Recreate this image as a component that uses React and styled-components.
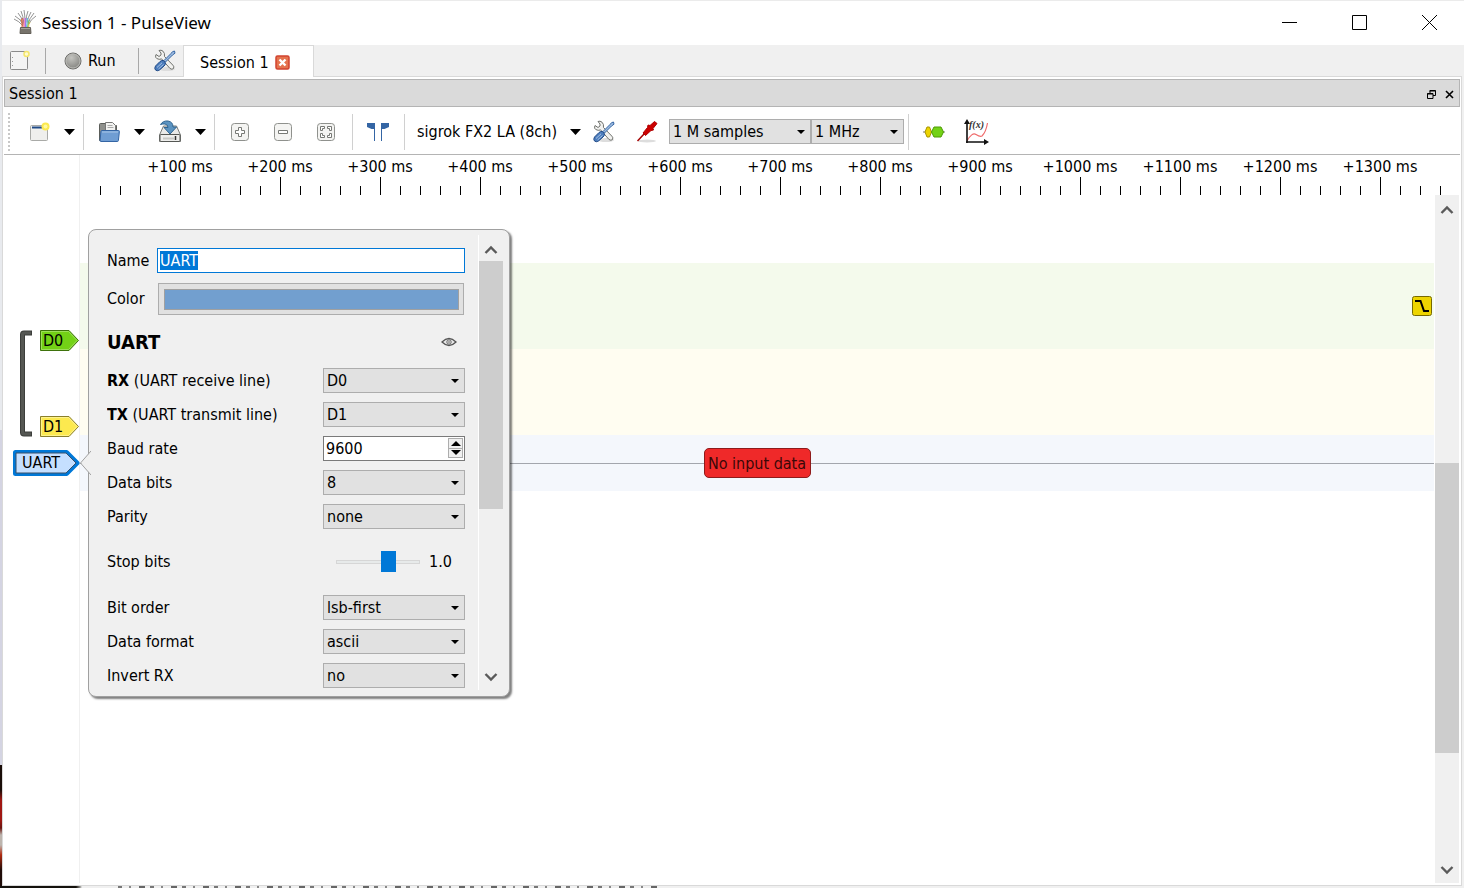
import React, { useEffect, useRef, useState } from "react";
import styled, { createGlobalStyle } from "styled-components";

const GlobalStyle = createGlobalStyle`
  *, *::before, *::after { box-sizing: border-box; }
  html, body, #root { height: 100%; }
  body {
    margin: 0;
    overflow: hidden;
    color: #000;
    font-family: "DejaVu Sans Condensed", "DejaVu Sans", sans-serif;
    font-size: 16px;
    line-height: 20px;
  }
  button, input, select { font: inherit; color: inherit; margin: 0; }
  button { padding: 0; border: 0; background: none; cursor: default; }
  svg { display: block; flex: none; }
`;

/* ---------- window frame ---------- */

const Desktop = styled.div`
  height: 100vh;
  display: flex;
  flex-direction: column;
  padding-left: 2px;
  background: linear-gradient(#e8eaee 0 430px, #d4d4e2 430px 765px, #1a0d08 765px 790px, #a01712 800px 820px, #6a1510 828px, #bdb5ae 835px 845px, #b02a10 855px, #200c08 870px);
`;

const DesktopEdge = styled.div`
  height: 2px;
  margin-left: -2px;
  background: linear-gradient(90deg, #15120d 0 76px, #8c8c88 80px, #f0f0f0 82px);
  &::after {
    content: "";
    display: block;
    height: 2px;
    margin-left: 118px;
    width: 544px;
    background: repeating-linear-gradient(90deg, #777 0 4px, transparent 4px 11px, #888 11px 13px, transparent 13px 21px, #666 21px 27px, transparent 27px 32px);
  }
`;

const Window = styled.main`
  flex: 1;
  min-height: 0;
  display: flex;
  flex-direction: column;
  background: #f0f0f0;
  border-top: 1px solid #ebebeb;
`;

const TitleBar = styled.header`
  height: 44px;
  flex: none;
  display: flex;
  align-items: center;
  background: #fff;
  padding: 0 0 1px 12px;
`;

const WindowTitle = styled.h1`
  flex: 1;
  margin: 0 0 0 5px;
  font-family: "Noto Sans", "Open Sans", sans-serif;
  font-size: 17px;
  font-weight: 400;
  line-height: 24px;
  white-space: nowrap;
`;

const WindowButton = styled.button`
  width: 70px;
  height: 43px;
  display: grid;
  place-items: center;
`;

const MainBar = styled.div`
  height: 31px;
  flex: none;
  display: flex;
  align-items: stretch;
`;

const MainSlot = styled.div`
  display: flex;
  align-items: center;
  width: ${(p) => p.$width}px;
  padding-left: ${(p) => p.$pad}px;
`;

const MainSeparator = styled.div`
  width: 1px;
  height: 26px;
  align-self: center;
  background: #a8a8a8;
`;

const RunButton = styled.button`
  display: flex;
  align-items: center;
  gap: 6px;
`;

const SessionTab = styled.div`
  display: flex;
  align-items: center;
  gap: 6px;
  width: 131px;
  padding: 2px 0 0 16px;
  margin-bottom: -1px;
  z-index: 1;
  background: #fff;
  border: 1px solid #d9d9d9;
  border-bottom: 0;
  white-space: nowrap;
`;

const Pane = styled.section`
  flex: 1;
  min-height: 0;
  display: flex;
  flex-direction: column;
  margin-right: 2px;
  padding: 2px 1px;
  background: #fff;
  border: 1px solid #d9d9d9;
`;

const DockTitle = styled.header`
  height: 28px;
  flex: none;
  display: flex;
  align-items: center;
  padding: 2px 1px 0 4px;
  background: #dadada;
  border: 1px solid #b4b4b4;
`;

const DockName = styled.h2`
  flex: 1;
  margin: 0;
  font-size: 16px;
  font-weight: 400;
`;

const DockButton = styled.button`
  width: 18px;
  height: 20px;
  display: grid;
  place-items: center;
`;

/* ---------- toolbar ---------- */

const Toolbar = styled.div`
  height: 48px;
  flex: none;
  display: flex;
  align-items: center;
  padding-top: 2px;
  border-bottom: 1px solid #b4b4b4;
`;

const Grip = styled.div`
  width: 2px;
  height: 38px;
  margin: 0 14px 0 4px;
  background: repeating-linear-gradient(#c8c8c8 0 2px, transparent 2px 4px);
`;

const ToolGroup = styled.div`
  height: 36px;
  display: flex;
  align-items: center;
  gap: ${(p) => p.$gap || 0}px;
  padding: 0 ${(p) => p.$end || 0}px 0 ${(p) => p.$start || 0}px;
  border-right: ${(p) => (p.$last ? 0 : 1)}px solid #d0d0d0;
`;

const SplitButton = styled.div`
  display: flex;
`;

const ToolButton = styled.button`
  width: 30px;
  height: 32px;
  display: grid;
  place-items: center;
`;

const MenuButton = styled(ToolButton)`
  width: 29px;
  padding-left: 2px;
`;

const DeviceButton = styled.button`
  width: 155px;
  height: 32px;
  padding-left: 12px;
  text-align: left;
  white-space: nowrap;
`;

const Combos = styled.div`
  display: flex;
  margin-left: -6px;
`;

/* ---------- controls ---------- */

const SelectFrame = styled.div`
  display: grid;
  align-items: center;
  width: ${(p) => p.$width}px;
  height: 25px;
  flex: none;
  > * { grid-area: 1 / 1; }
  > svg { justify-self: end; margin-right: 6px; pointer-events: none; }
`;

const SelectBox = styled.select`
  appearance: none;
  width: 100%;
  height: 25px;
  padding: 0 3px;
  line-height: 20px;
  background: #e1e1e1;
  border: 1px solid #adadad;
  border-radius: 0;
  outline: 0;
`;

const TextBox = styled.input`
  width: 100%;
  height: 25px;
  padding: 0 2px;
  background: #fff;
  border: 1px solid #0078d7;
  outline: 0;
  &::selection { background: #0078d7; color: #fff; }
`;

const SpinFrame = styled.div`
  display: flex;
  width: 142px;
  height: 25px;
  padding: 1px 1px 2px 0;
  background: #fff;
  border: 1px solid #7a7a7a;
`;

const SpinInput = styled.input`
  flex: 1;
  min-width: 0;
  padding: 1px 2px 0;
  border: 0;
  outline: 0;
  background: none;
`;

const SpinButtons = styled.div`
  display: flex;
  flex-direction: column;
  width: 15px;
`;

const SpinButton = styled.button`
  flex: 1;
  display: grid;
  place-items: center;
  background: #f0f0f0;
  border: 1px solid #adadad;
  & + & { border-top: 0; }
`;

const Slider = styled.input`
  appearance: none;
  width: 84px;
  height: 21px;
  background: none;
  outline: 0;
  &::-webkit-slider-runnable-track {
    height: 4px;
    background: #e7eaea;
    border: 1px solid #d6d6d6;
  }
  &::-webkit-slider-thumb {
    appearance: none;
    width: 15px;
    height: 21px;
    margin-top: -10px;
    background: #0078d7;
  }
`;

/* ---------- trace view ---------- */

const Workspace = styled.div`
  flex: 1;
  min-height: 0;
  display: flex;
  position: relative;
`;

const Gutter = styled.div`
  width: 76px;
  flex: none;
  padding-top: 175px;
  border-right: 1px solid #f0f0f0;
`;

const ChannelGroup = styled.div`
  display: flex;
  justify-content: space-between;
  height: 107px;
  padding-left: 15px;
`;

const GroupTags = styled.div`
  display: flex;
  flex-direction: column;
  justify-content: space-between;
`;

const Tag = styled.button`
  display: grid;
  align-items: center;
  justify-items: start;
  text-align: left;
  > * { grid-area: 1 / 1; }
`;

const TagText = styled.span`
  padding-left: ${(p) => p.$pad}px;
`;

const DecoderTagRow = styled.div`
  display: flex;
  justify-content: flex-end;
  margin: 12px -1px 0 0;
`;

const Scene = styled.div`
  flex: 1;
  min-width: 0;
  display: flex;
  flex-direction: column;
`;

const Ruler = styled.div`
  height: 40px;
  flex: none;
  display: flex;
  padding-left: 50px;
  overflow: hidden;
  position: relative;
  &::after {
    content: "";
    position: absolute;
    left: 20px;
    right: 0;
    bottom: 0;
    height: 9px;
    background: repeating-linear-gradient(90deg, #000 0 1px, transparent 1px 20px);
  }
`;

const RulerMark = styled.div`
  width: 100px;
  flex: none;
  display: flex;
  flex-direction: column;
  align-items: center;
  justify-content: space-between;
  padding-top: 2px;
  white-space: nowrap;
  &::after {
    content: "";
    width: 1px;
    height: 18px;
    margin-left: 1px;
    background: #000;
  }
`;

const SceneBody = styled.div`
  flex: 1;
  min-height: 0;
  display: flex;
  gap: 1px;
  padding-right: 1px;
`;

const Lanes = styled.div`
  flex: 1;
  padding-top: 68px;
`;

const Lane = styled.div`
  display: flex;
  align-items: center;
  justify-content: flex-end;
  height: ${(p) => p.$height}px;
  padding-right: 2px;
  background: ${(p) => p.$color};
`;

const DecoderLane = styled(Lane)`
  justify-content: center;
  padding: 0;
  &::before, &::after {
    content: "";
    flex: 1;
    height: 1px;
    background: #a3a6ad;
  }
`;

const ErrorNote = styled.div`
  width: 107px;
  height: 30px;
  border: 1px solid #8e1b1b;
  border-radius: 5px;
  background: #ef2929;
  color: #3a0808;
  line-height: 29px;
  text-align: center;
  white-space: nowrap;
`;

/* ---------- scroll bars ---------- */

const ScrollTrack = styled.div`
  width: ${(p) => (p.$line ? 25 : 24)}px;
  flex: none;
  display: flex;
  flex-direction: column;
  background: #f0f0f0;
  border-left: ${(p) => (p.$line ? 1 : 0)}px solid #fff;
`;

const ScrollButton = styled.button`
  height: 26px;
  flex: none;
  display: grid;
  place-items: center;
  &:first-child { padding-top: 4px; }
`;

const ScrollSpace = styled.div`
  flex: ${(p) => p.$share};
  background: ${(p) => (p.$thumb ? "#cdcdcd" : "transparent")};
`;

/* ---------- decoder popup ---------- */

const Popup = styled.form`
  position: absolute;
  left: 84px;
  top: 74px;
  width: 422px;
  height: 468px;
  display: flex;
  padding: 5px 6px 6px 18px;
  background: #f0f0f0;
  border: 1px solid #a0a0a0;
  border-radius: 8px;
  box-shadow: 2px 2px 2px rgba(0, 0, 0, 0.5);
`;

const PopupPointer = styled.svg`
  position: absolute;
  left: -9px;
  top: 220px;
`;

const PopupBody = styled.div`
  flex: 1;
  margin-right: 13px;
  padding-top: 13px;
  overflow: hidden;
`;

const FormRow = styled.div`
  display: flex;
  align-items: center;
  justify-content: space-between;
  height: ${(p) => p.$height || 25}px;
  margin-bottom: 9px;
  white-space: nowrap;
`;

const WideField = styled.div`
  width: 308px;
`;

const ColorButton = styled.button`
  display: block;
  width: 306px;
  height: 32px;
  margin-left: 1px;
  padding: 5px 4px 4px 5px;
  background: #e1e1e1;
  border: 1px solid #adadad;
`;

const Swatch = styled.span`
  display: block;
  height: 21px;
  background: #729fcf;
  border: 1px solid #a0a0a0;
`;

const DecoderHeading = styled.h3`
  margin: 0;
  font-size: 20px;
  font-weight: 700;
`;

const EyeButton = styled.button`
  width: 32px;
  height: 24px;
  display: grid;
  place-items: center;
`;

const SliderField = styled.div`
  display: flex;
  align-items: center;
  gap: 9px;
  width: 129px;
`;

/* ---------- icons ---------- */

const Triangle = ({ width = 11, height = 6, up }) => (
  <svg width={width} height={height} viewBox="0 0 11 6" preserveAspectRatio="none">
    <path d={up ? "M0 6h11L5.500 0z" : "M0 0h11L5.500 6z"} fill="#000" />
  </svg>
);

const Chevron = ({ up }) => (
  <svg width="14" height="10" viewBox="0 0 14 10" fill="none" stroke="#5a5a5a" strokeWidth="2.400">
    <path d={up ? "M1.500 8 7 2.500 12.500 8" : "M1.500 2 7 7.500 12.500 2"} />
  </svg>
);

const AppIcon = () => (
  <svg width="23" height="25" viewBox="0 0 23 25" fill="none" strokeWidth="1">
    <path
      d="M9 15Q7 9 1 6M9 14Q8 7 4 3M10 13Q9 6 7 1M11 12Q11 6 10 0M12 12Q12 6 14 1M13 13Q14 7 17 2M14 14Q15 9 20 3M14 15Q17 9 22 6M9 16Q5 11 0 9"
      stroke="#777"
      strokeWidth="0.800"
    />
    <path d="M8 18Q8.500 12 7 9" stroke="#d8743c" />
    <path d="M9 18Q9.500 11 8.500 8" stroke="#e2554f" />
    <path d="M10.500 18V8" stroke="#e98bd0" />
    <path d="M11.500 18V8" stroke="#9d79e8" />
    <path d="M12.500 18Q13 12 13.500 8" stroke="#59b4e8" />
    <path d="M13.500 18Q14 13 15 10" stroke="#70c95c" />
    <path d="M14.500 18Q14.500 14 16 12" stroke="#d6bd43" />
    <path d="M6.500 17.500h10l.5 6H6z" fill="#77736b" stroke="#625e57" />
    <path d="M7 18.500h9" stroke="#a6a299" />
  </svg>
);

const NewPageIcon = () => (
  <svg width="21" height="22" viewBox="0 0 21 22">
    <rect x="1.500" y="1.500" width="17" height="18" rx="1" fill="#f4f4f4" stroke="#8b8b8b" />
    <path d="M3.500 7v1M3.500 11v1M3.500 15v1" stroke="#999" />
    <circle cx="17.500" cy="4" r="2.500" fill="#fffbd0" stroke="#f5e66b" strokeWidth="1.500" />
  </svg>
);

const RunIcon = () => (
  <svg width="18" height="18" viewBox="0 0 18 18">
    <defs>
      <radialGradient id="led" cx="0.4" cy="0.3" r="0.7">
        <stop offset="0" stopColor="#c4c4c0" />
        <stop offset="1" stopColor="#858581" />
      </radialGradient>
    </defs>
    <circle cx="9" cy="9" r="8" fill="url(#led)" stroke="#6d6d6a" />
    <circle cx="9" cy="9" r="7" fill="none" stroke="#b9b9b5" />
  </svg>
);

const ToolsIcon = () => (
  <svg width="22" height="23" viewBox="0 0 22 23">
    <ellipse cx="13" cy="20" rx="8" ry="2" fill="#ddd" />
    <path d="M5 1.500 7 4v2L5 7.500 2 5.500Q.5 9 4 10q2 .8 3.500-.2l8.500 9.700q2 1.500 3.500 0 1-1.800-.6-3.300L10.500 7.500Q11 4 9 2.200 7 .500 5 1.500z" fill="#f1f1ef" stroke="#6f716d" />
    <path d="M18.500 2.700 20.500 2 21 4.200 18.500 6 11.500 13 10 11.500 17 4.500z" fill="#9dbbe0" stroke="#3465a4" />
    <path d="M9.500 11.500 11.500 14q0 1.800-1.500 3L5.500 21q-2.500 1.500-4 0t0-4L6 12.500q1.800-1.500 3.500-1z" fill="#4c7dbd" stroke="#204a87" />
    <path d="M3 18.500 8 13.800M4.500 20 9.500 15.500" stroke="#a9c4e6" />
  </svg>
);

const TabCloseIcon = () => (
  <svg width="15" height="15" viewBox="0 0 15 15">
    <rect x="1" y="1" width="13" height="13" rx="1.500" fill="#e5734e" stroke="#d1432f" strokeWidth="1.500" />
    <path d="m4.500 4.500 6 6m0-6-6 6" stroke="#fff" strokeWidth="2.400" />
  </svg>
);

const NewSessionIcon = () => (
  <svg width="22" height="22" viewBox="0 0 22 22">
    <rect x="2.500" y="4.500" width="17" height="15" rx="1" fill="#efefed" stroke="#a9aaa7" />
    <path d="M4 6.500h13" stroke="#204a87" strokeWidth="2" />
    <circle cx="17.500" cy="5.500" r="4" fill="#fce94f" />
    <circle cx="17.500" cy="5.500" r="2" fill="#fff9a0" />
  </svg>
);

const OpenIcon = () => (
  <svg width="22" height="22" viewBox="0 0 22 22">
    <path d="M1.500 19.500V3.500q0-1 1-1h5l2 2h9v15z" fill="#8f908c" stroke="#5b5d59" />
    <path d="M7.500 12V1.500h7l3 3V12z" fill="#f3f3f1" stroke="#777" />
    <path d="M9.500 4.500h5M9.500 6.500h6" stroke="#aaa" />
    <path d="M4 9.500h16.500q1 0 .9 1l-1 9q-.1 1-1 1H3q-1 0-.9-1l.8-9q.1-1 1.100-1z" fill="#6f9dd3" stroke="#3465a4" />
    <path d="M4 11h16" stroke="#a9c6e8" />
  </svg>
);

const SaveIcon = () => (
  <svg width="22" height="23" viewBox="0 0 22 23">
    <path d="M4.500 6h13l4 9v6.500h-21V15z" fill="#e9e9e7" stroke="#777976" />
    <rect x="1" y="14.500" width="20" height="7" rx="1" fill="#eeeeec" stroke="#555753" />
    <path d="M4 18.500h11" stroke="#c8c8c5" strokeWidth="2" />
    <path d="M16.500 16v4" stroke="#333" strokeWidth="1.500" />
    <path d="M1.500 4.500Q4 .5 9 1q5 .8 5 6h3.500L11 14 5 7.500h4Q9 4.500 6 4 3.500 3.700 1.500 4.500z" fill="#5b93c1" stroke="#2f6592" />
  </svg>
);

const ZoomIcon = ({ kind }) => (
  <svg width="20" height="20" viewBox="0 0 20 20">
    <rect x="1.500" y="1.500" width="17" height="17" rx="3" fill="#f4f4f2" stroke="#8f918d" />
    {kind === "in" && <path d="M8.500 5.500h3v3h3v3h-3v3h-3v-3h-3v-3h3z" fill="#fff" stroke="#777975" />}
    {kind === "out" && <path d="M5.500 8.500h9v3h-9z" fill="#fff" stroke="#777975" />}
    {kind === "fit" && (
      <path
        d="M4.500 4.500h4v2h-2v2h-2zM11.500 4.500h4v4h-2v-2h-2zM4.500 11.500h2v2h2v2h-4zM13.500 11.500h2v4h-4v-2h2z"
        fill="#fff"
        stroke="#777975"
      />
    )}
  </svg>
);

const CursorsIcon = () => (
  <svg width="22" height="20" viewBox="0 0 22 20" fill="#3465a4">
    <path d="M0 1h8v18H7V7H4.500L0 5zM22 1h-8v18h1V7h2.500L22 5z" />
  </svg>
);

const ProbeIcon = () => (
  <svg width="22" height="22" viewBox="0 0 22 22">
    <ellipse cx="11" cy="20" rx="9" ry="1.500" fill="#ddd" />
    <path d="M1.500 20 8.500 12.500" stroke="#a40000" strokeWidth="1.500" />
    <path d="M7 12 11.500 6.500l.5-2.500 2 .5L18.500.5l2.500 2L17 7.500l.5 1.500-2.500.5L9.500 14.500z" fill="#cc0000" stroke="#b00000" />
  </svg>
);

const DecoderIcon = () => (
  <svg width="22" height="12" viewBox="0 0 22 12">
    <path d="M0 6h22" stroke="#777" />
    <path d="M4 1h2.500L8.500 6l-2 5H4L2 6z" fill="#edd400" stroke="#a89600" />
    <path d="M11 1h7l2.500 5L18 11h-7L8.500 6z" fill="#73d216" stroke="#4e9a06" />
  </svg>
);

const MathIcon = () => (
  <svg width="26" height="26" viewBox="0 0 26 26">
    <path d="M3 22Q8 13 12 15.500t6 1.500Q22 13 23.500 4" fill="none" stroke="#ef6b6b" strokeWidth="1.200" />
    <path d="M3 24V3M2 23h20" stroke="#111" strokeWidth="1.600" />
    <path d="M0 5 3 0l3 5zM20 20l5 3-5 3z" fill="#111" />
    <text x="5" y="9" fontFamily="Liberation Serif, serif" fontStyle="italic" fontWeight="700" fontSize="10" fill="#333">f(x)</text>
  </svg>
);

const EyeIcon = () => (
  <svg width="16" height="10" viewBox="0 0 16 10" fill="none">
    <path d="M1 5Q4.500 1.500 8 1.500t7 3.500Q11.500 8.500 8 8.500T1 5z" fill="#e9e9e9" stroke="#555" strokeWidth="1.300" />
    <circle cx="8" cy="5" r="2.200" stroke="#666" />
    <circle cx="8" cy="5" r="0.800" fill="#555" />
  </svg>
);

const TriggerIcon = () => (
  <svg width="20" height="20" viewBox="0 0 20 20">
    <rect x="0.500" y="0.500" width="19" height="19" rx="2" fill="#edd400" stroke="#776a00" />
    <path d="M3 5h5.500l3.500 10h5" fill="none" stroke="#000" strokeWidth="2" />
  </svg>
);

const BracketIcon = () => (
  <svg width="14" height="107" viewBox="0 0 14 107" fill="none">
    <path d="M13 3H5q-1.500 0-1.500 1.500v98Q3.500 104 5 104h8" stroke="#3c3e3b" strokeWidth="5" />
    <path d="M12 3H5q-1.500 0-1.500 1.500v98Q3.500 104 5 104h7" stroke="#555753" strokeWidth="3" />
  </svg>
);

/* ---------- composed parts ---------- */

function Select({ id, label, options, width = 142 }) {
  return (
    <SelectFrame $width={width}>
      <SelectBox id={id} aria-label={label}>
        {options.map((o) => (
          <option key={o}>{o}</option>
        ))}
      </SelectBox>
      <Triangle width={8} height={4} />
    </SelectFrame>
  );
}

function SelectRow({ id, label, options }) {
  return (
    <FormRow>
      <label htmlFor={id}>{label}</label>
      <Select id={id} options={options} />
    </FormRow>
  );
}

function ChannelTag({ name, fill, light, stroke }) {
  return (
    <Tag>
      <svg width="39" height="21" viewBox="0 0 39 21">
        <path d="M.5.5h28.500l9.500 10-9.500 10H.5z" fill={fill} stroke={stroke} />
        <path d="M1.500 1.500h27l8.500 9-8.500 9h-27z" fill="none" stroke={light} />
      </svg>
      <TagText $pad={3}>{name}</TagText>
    </Tag>
  );
}

function ScrollBar({ line, before, thumb, after }) {
  return (
    <ScrollTrack $line={line}>
      <ScrollButton type="button" aria-label="Scroll up"><Chevron up /></ScrollButton>
      <ScrollSpace $share={before} />
      <ScrollSpace $share={thumb} $thumb />
      <ScrollSpace $share={after} />
      <ScrollButton type="button" aria-label="Scroll down"><Chevron /></ScrollButton>
    </ScrollTrack>
  );
}

function DecoderPopup() {
  const nameRef = useRef(null);
  const [name, setName] = useState("UART");
  const [baud, setBaud] = useState("9600");

  useEffect(() => {
    nameRef.current.focus();
    nameRef.current.select();
  }, []);

  const stepBaud = (n) => setBaud(String((Number(baud) || 0) + n));

  return (
    <Popup onSubmit={(e) => e.preventDefault()}>
      <PopupPointer width="11" height="26" viewBox="0 0 11 26">
        <path d="M11 1 1 13l10 12z" fill="#f0f0f0" />
        <path d="M11 1 .5 13 11 25" fill="none" stroke="#a0a0a0" />
      </PopupPointer>
      <PopupBody>
        <FormRow>
          <label htmlFor="name">Name</label>
          <WideField>
            <TextBox id="name" ref={nameRef} value={name} onChange={(e) => setName(e.target.value)} />
          </WideField>
        </FormRow>
        <FormRow $height={34}>
          <label htmlFor="color">Color</label>
          <WideField>
            <ColorButton id="color" type="button"><Swatch /></ColorButton>
          </WideField>
        </FormRow>
        <FormRow $height={34}>
          <DecoderHeading>UART</DecoderHeading>
          <EyeButton type="button" aria-label="Show decoder"><EyeIcon /></EyeButton>
        </FormRow>
        <SelectRow id="rx" label={<><b>RX</b> (UART receive line)</>} options={["D0", "D1"]} />
        <SelectRow id="tx" label={<><b>TX</b> (UART transmit line)</>} options={["D1", "D0"]} />
        <FormRow>
          <label htmlFor="baud">Baud rate</label>
          <SpinFrame>
            <SpinInput id="baud" value={baud} onChange={(e) => setBaud(e.target.value)} />
            <SpinButtons>
              <SpinButton type="button" aria-label="Increase" onClick={() => stepBaud(1)}>
                <Triangle width={10} height={5} up />
              </SpinButton>
              <SpinButton type="button" aria-label="Decrease" onClick={() => stepBaud(-1)}>
                <Triangle width={10} height={5} />
              </SpinButton>
            </SpinButtons>
          </SpinFrame>
        </FormRow>
        <SelectRow id="bits" label="Data bits" options={["8", "7", "9"]} />
        <SelectRow id="parity" label="Parity" options={["none", "odd", "even"]} />
        <FormRow $height={48}>
          <label htmlFor="stop">Stop bits</label>
          <SliderField>
            <Slider id="stop" type="range" min="0" max="20" defaultValue="13" />
            <output htmlFor="stop">1.0</output>
          </SliderField>
        </FormRow>
        <SelectRow id="order" label="Bit order" options={["lsb-first", "msb-first"]} />
        <SelectRow id="format" label="Data format" options={["ascii", "hex", "dec"]} />
        <SelectRow id="invert" label="Invert RX" options={["no", "yes"]} />
      </PopupBody>
      <ScrollBar line before={0} thumb={248} after={155} />
    </Popup>
  );
}

const RULER_MARKS = Array.from({ length: 13 }, (_, i) => `+${(i + 1) * 100} ms`);

export default function App() {
  return (
    <Desktop>
      <GlobalStyle />
      <Window>
        <TitleBar>
          <AppIcon />
          <WindowTitle>Session 1 - PulseView</WindowTitle>
          <WindowButton aria-label="Minimize">
            <svg width="15" height="15"><path d="M0 7.500h15" stroke="#000" /></svg>
          </WindowButton>
          <WindowButton aria-label="Maximize">
            <svg width="15" height="15"><path d="M.5.5h14v14H.5z" fill="none" stroke="#000" /></svg>
          </WindowButton>
          <WindowButton aria-label="Close">
            <svg width="15" height="15"><path d="m0 0 15 15M15 0 0 15" stroke="#000" /></svg>
          </WindowButton>
        </TitleBar>

        <MainBar>
          <MainSlot $width={43} $pad={7}>
            <button aria-label="New session"><NewPageIcon /></button>
          </MainSlot>
          <MainSeparator />
          <MainSlot $width={92} $pad={18}>
            <RunButton><RunIcon />Run</RunButton>
          </MainSlot>
          <MainSeparator />
          <MainSlot $width={44} $pad={15}>
            <button aria-label="Settings"><ToolsIcon /></button>
          </MainSlot>
          <SessionTab>
            Session 1
            <button aria-label="Close session"><TabCloseIcon /></button>
          </SessionTab>
        </MainBar>

        <Pane>
          <DockTitle>
            <DockName>Session 1</DockName>
            <DockButton aria-label="Float">
              <svg width="9" height="9" fill="none" stroke="#000">
                <path d="M3 3.500V.5h5.500v5H6M2.500 1h6M.5 3.500h5.500v5H.5zM0 4h6" />
              </svg>
            </DockButton>
            <DockButton aria-label="Close">
              <svg width="9" height="9"><path d="m1 1 7 7M8 1 1 8" stroke="#000" strokeWidth="1.600" /></svg>
            </DockButton>
          </DockTitle>

          <Toolbar>
            <Grip />
            <ToolGroup>
              <SplitButton>
                <ToolButton aria-label="New view"><NewSessionIcon /></ToolButton>
                <MenuButton aria-label="New view menu"><Triangle /></MenuButton>
              </SplitButton>
            </ToolGroup>
            <ToolGroup $start={10} $gap={2}>
              <SplitButton>
                <ToolButton aria-label="Open"><OpenIcon /></ToolButton>
                <MenuButton aria-label="Open menu"><Triangle /></MenuButton>
              </SplitButton>
              <SplitButton>
                <ToolButton aria-label="Save"><SaveIcon /></ToolButton>
                <MenuButton aria-label="Save menu"><Triangle /></MenuButton>
              </SplitButton>
            </ToolGroup>
            <ToolGroup $start={10} $end={11} $gap={13}>
              <ToolButton aria-label="Zoom in"><ZoomIcon kind="in" /></ToolButton>
              <ToolButton aria-label="Zoom out"><ZoomIcon kind="out" /></ToolButton>
              <ToolButton aria-label="Zoom to fit"><ZoomIcon kind="fit" /></ToolButton>
            </ToolGroup>
            <ToolGroup $start={10} $end={11}>
              <ToolButton aria-label="Show cursors"><CursorsIcon /></ToolButton>
            </ToolGroup>
            <ToolGroup $end={4} $gap={13}>
              <SplitButton>
                <DeviceButton>sigrok FX2 LA (8ch)</DeviceButton>
                <MenuButton aria-label="Device menu"><Triangle /></MenuButton>
                <ToolButton aria-label="Configure device"><ToolsIcon /></ToolButton>
              </SplitButton>
              <ToolButton aria-label="Channels"><ProbeIcon /></ToolButton>
              <Combos>
                <Select label="Sample count" width={142} options={["1 M samples", "10 M samples"]} />
                <Select label="Sample rate" width={93} options={["1 MHz", "2 MHz"]} />
              </Combos>
            </ToolGroup>
            <ToolGroup $start={10} $gap={13} $last>
              <ToolButton aria-label="Add decoder"><DecoderIcon /></ToolButton>
              <ToolButton aria-label="Add math signal"><MathIcon /></ToolButton>
            </ToolGroup>
          </Toolbar>

          <Workspace>
            <Gutter>
              <ChannelGroup>
                <BracketIcon />
                <GroupTags>
                  <ChannelTag name="D0" fill="#73d216" light="#9de05a" stroke="#3e720c" />
                  <ChannelTag name="D1" fill="#fce94f" light="#fdf28f" stroke="#8a7f2a" />
                </GroupTags>
              </ChannelGroup>
              <DecoderTagRow>
                <Tag>
                  <svg width="68" height="28" viewBox="0 0 68 28" strokeLinejoin="round">
                    <path d="M3.500 3.500h51l10.500 10.500-10.500 10.500H3.500z" fill="#c5dfff" stroke="#0078d7" strokeWidth="5" />
                    <path d="M4 4h50l10 10-10 10H4z" fill="#c5dfff" stroke="#39506b" />
                  </svg>
                  <TagText $pad={10}>UART</TagText>
                </Tag>
              </DecoderTagRow>
            </Gutter>

            <Scene>
              <Ruler>
                {RULER_MARKS.map((m) => (
                  <RulerMark key={m}>{m}</RulerMark>
                ))}
              </Ruler>
              <SceneBody>
                <Lanes>
                  <Lane $height={86} $color="#f4faec"><TriggerIcon /></Lane>
                  <Lane $height={86} $color="#fffdf1" />
                  <DecoderLane $height={56} $color="#f4f7fc">
                    <ErrorNote>No input data</ErrorNote>
                  </DecoderLane>
                </Lanes>
                <ScrollBar before={242} thumb={290} after={104} />
              </SceneBody>
            </Scene>

            <DecoderPopup />
          </Workspace>
        </Pane>
      </Window>
      <DesktopEdge />
    </Desktop>
  );
}
